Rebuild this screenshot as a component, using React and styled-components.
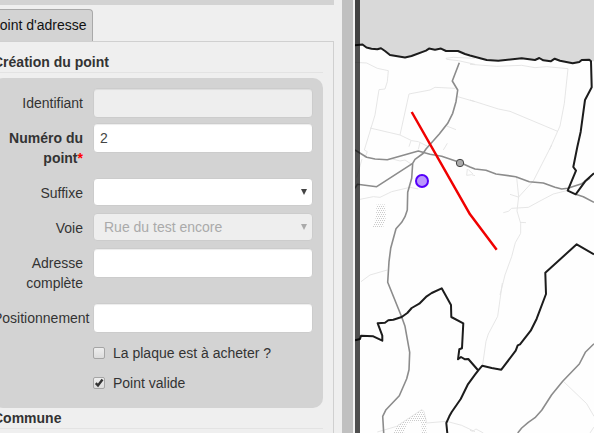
import React from "react";
import styled, { createGlobalStyle } from "styled-components";

const GlobalStyle = createGlobalStyle`
  * { box-sizing: border-box; }
  body { margin: 0; overflow: hidden; background: #fff; }
`;

const Page = styled.div`
  display: flex;
  width: 594px;
  height: 433px;
  overflow: hidden;
  font: 14px/20px "Liberation Sans", Arial, sans-serif;
  color: #333;
`;

const Sidebar = styled.aside`
  width: 342px;
  flex: none;
  height: 433px;
  overflow: hidden;
  background: #efefef;
`;

const TopBar = styled.div`
  width: 334px;
  height: 5px;
  background: #d3d3d3;
`;

const TabList = styled.div`
  display: flex;
  height: 36px;
  padding-top: 4px;
  margin-left: -17px;
`;

const Tab = styled.div`
  width: 110px;
  height: 32px;
  padding: 5px 0 0 6.5px;
  border: 1px solid #a9a9a9;
  border-bottom: 0;
  border-radius: 4px 4px 0 0;
  background: #d3d3d3;
  color: #111;
  white-space: nowrap;
`;

const TabPanel = styled.section`
  width: 351px;
  height: 410px;
  margin-left: -17px;
  padding: 0 10px 0 9px;
  border: 1px solid #d0d0d0;
`;

const Legend = styled.h2`
  margin: 0;
  height: ${(p) => p.$height}px;
  padding-top: ${(p) => p.$top}px;
  border-bottom: 1px solid #e3e3e3;
  font-size: 14px;
  line-height: 20px;
  font-weight: bold;
`;

const FieldGroup = styled.div`
  width: 330px;
  height: 330px;
  margin-top: 5px;
  padding: 10px 10px 0 0;
  border-radius: 10px;
  background: #d3d3d3;
`;

const Row = styled.div`
  display: grid;
  grid-template-columns: 90px 220px;
  column-gap: 10px;
  height: ${(p) => (p.$tall ? 55 : 35)}px;
`;

const Label = styled.label`
  padding-top: 5px;
  text-align: right;
  font-weight: ${(p) => (p.$bold ? "bold" : "normal")};
`;

const Required = styled.span`
  color: #f00;
`;

const Input = styled.input`
  width: 220px;
  height: 30px;
  padding: 0 6px;
  border: 1px solid #ccc;
  border-radius: 4px;
  background: ${(p) => (p.disabled ? "#eee" : "#fff")};
  box-shadow: inset 0 1px 1px rgba(0, 0, 0, 0.075);
  font: inherit;
  font-size: 14px;
  color: #444;
`;

const SelectBox = styled.div`
  display: flex;
  align-items: center;
  justify-content: space-between;
  height: 28px;
  padding: 0 5px 0 10px;
  border: 1px solid #ccc;
  border-radius: 4px;
  background: ${(p) => (p.$disabled ? "#eee" : "#fff")};
  color: ${(p) => (p.$disabled ? "#aaa" : "#444")};
`;

const Arrow = styled.i`
  border: 3px solid transparent;
  border-top: 6px solid currentColor;
  border-bottom: 0;
`;

const CheckRow = styled.label`
  display: flex;
  align-items: center;
  height: 30px;
  padding-left: 100px;
  gap: 8px;
`;

const CheckBox = styled.span`
  display: flex;
  width: 12px;
  height: 12px;
  border: 1px solid #a5a5a5;
  border-radius: 2px;
  background: linear-gradient(#eee, #dcdcdc);
`;

const Splitter = styled.div`
  width: 13px;
  flex: none;
  background: #c0c0c0;
  border-right: 2px solid #f4f4f4;
`;

const MapView = styled.svg`
  display: block;
  flex: none;
  width: 239px;
  height: 433px;
  fill: none;
  stroke-linejoin: round;
`;

const coast =
  "355,45.3 362.5,44.5 366.5,47.5 371.5,48.7 377.3,49.3 381,48.2 385,51 390,55 405,57.5 411.5,56 426,50.6 429,48.6 435,49.7 441,48.6 446,51 458,51 465,54 470,55.5 486.7,60 498.3,60.7 521.7,58.3 535,60 539.3,58 543.3,60.3 550.7,61.3 554.7,58.7 560,60.7 572.7,63.3 579.3,62 581.7,60 589.3,59.7 591,61.3";

const borders = [
  coast +
    " 591.7,87.3 585,100 580.7,131.7 577.3,147 573.3,167 576,170.7 567.7,190.7 575.7,194.3 585.7,180.7 594,173.2",
  "355,340.3 360,339 361,335.7 373.3,336.3 382.3,340.7 382.3,335.7 377.7,323.3 385,322.7 388.3,320.3 393.3,319.7 401.7,317 407.3,313 411.7,308 419.3,303.7 426.7,296.3 431.7,293 441.7,288.3 451,305 451.3,317 463.3,323.3 462,348.3 459.3,349.3 458,359.3 461,357 465,359.3 468.3,359 478.3,370.5",
  "594,254.3 576.7,244.3 545.3,272.7 546,294 536.7,318.7 530.7,330.7 520,344.3 517.7,345.3 515.7,350.7 501.3,369.7 491.7,368 482.3,365.7 478.3,370.3 475,374.7 467.7,384.7 460.7,399 451.7,412 449.3,416.3 446.3,423 447.3,433",
];

const roads = [
  "459.3,62.7 452.3,81 457.7,90 456,101.7 452.7,113.3 447.7,123.3 439.3,134 426,149 423,153.5 415,159.3 412.7,163.3 411.7,178.3 407.7,192.3 407.3,210 405,216.7 401.7,222.3 396,228.7 390.7,248.3 389,261.7 387.7,282.3 401.7,317 405,326.3 409.7,352.3 409,369.7 406.7,378.7 399.3,395.7 386,409.7 382.7,416.3 383.7,433",
  "355,150 366.7,157.3 375,159 387.3,159.7 418.3,151 430,154.3 441.7,156.3 460,162.5 470,167 475,169 486,170.3 496,174 515.7,176.7 529.3,181.7 543.3,183 555,187.3 561.7,189 567.7,188.3 581.7,183.7 590,178",
  "355,188.3 357.3,184.3 376.7,186.7 412.7,163.3",
  "575.7,194.3 583.3,196.7 594,202.3",
  "517.7,433 521.7,428 528.3,422.3 535,417.7 541.7,410.3 551.7,394.7 562.7,381.3 579.3,364 585.3,352.3 594,343.7",
];

/* Parcel tracks by map sheet, each drawn at three times the map scale. */
const tracks = [
  {
    x: 350,
    y: 0,
    d: "M15 187L50 189 82 205 115 212 112 245 105 267 87 269 75 345 43 450M60 384L150 405 185 422 205 425 235 440M150 405L177 282 240 270 255 262 315 265M323 290L375 305M375 175L310 172 288 175 290 178 325 182 375 193M290 378L318 389M183 422L177 440M210 428L205 448M292 430L280 450",
  },
  {
    x: 470,
    y: 0,
    d: "M0 193L80 199 155 196 195 203 230 200 294 206 283 310 270 378 238 450M0 300L85 327 120 334 263 394",
  },
  {
    x: 350,
    y: 145,
    d: "M43 15L52 20 45 38M36 42L20 98M120 40L150 48 165 45 185 58M30 163L70 155 90 157 125 140 180 127 205 132M33 410L60 390 112 375M352 72L350 91 365 89 375 92M355 74L369 87",
  },
  {
    x: 470,
    y: 145,
    d: "M245 0L190 108 145 157M140 98L146 155 141 198 152 235 152 265 136 293 125 335 105 390 90 450M120 148L145 156M100 203L115 199 125 190 175 187 210 168 250 147 290 137M150 232L168 233",
  },
  {
    x: 350,
    y: 283,
    d: "M82 447L140 430 215 380 222 385 230 420 290 415 335 427 375 446",
  },
  {
    x: 470,
    y: 283,
    d: "M97 0L90 50 83 100 55 153 48 175 38 245M280 295L350 362 372 400M0 442L8 445 18 438 40 450M372 432L360 450",
  },
];

function TextRow({ label, value = "", tall, bold, required, disabled }) {
  return (
    <Row $tall={tall}>
      <Label $bold={bold}>
        {label}
        {required && <Required>*</Required>}
      </Label>
      <Input defaultValue={value} disabled={disabled} />
    </Row>
  );
}

function SelectRow({ label, value, disabled }) {
  return (
    <Row>
      <Label>{label}</Label>
      <SelectBox $disabled={disabled}>
        <span>{value}</span>
        <Arrow />
      </SelectBox>
    </Row>
  );
}

function Check({ label, checked }) {
  return (
    <CheckRow>
      <CheckBox>
        {checked && (
          <svg width="10" height="10" viewBox="0 0 10 10">
            <path d="M1.8 5.1L4 7.5L8.5 1.6" fill="none" stroke="#333" strokeWidth="2.4" />
          </svg>
        )}
      </CheckBox>
      {label}
    </CheckRow>
  );
}

function ParcelMap() {
  return (
    <MapView viewBox="355 0 239 433">
      <defs>
        <pattern id="dots" width="2" height="4" patternUnits="userSpaceOnUse">
          <path d="M0 0h1v1h-1zM1 2h1v1h-1z" fill="#cbcbcb" />
        </pattern>
      </defs>
      <rect x="355" width="239" height="433" fill="#fefefe" />
      <polygon points={`355,0 ${coast} 594,61.3 594,0`} fill="#d9d9d9" />
      {tracks.map((t) => (
        <path
          key={`${t.x}-${t.y}`}
          d={t.d}
          transform={`translate(${t.x} ${t.y}) scale(.33333)`}
          stroke="#e3e3e3"
          strokeWidth="2.7"
        />
      ))}
      <path d="M376.5 204.5H385L386 217L383 228H372.5L376 217Z" fill="url(#dots)" />
      <path d="M393 433L398 425L421.5 410L426 418L426.5 433H422L421 421L407 423L404 433Z" fill="url(#dots)" />
      {roads.map((points) => (
        <polyline key={points} points={points} stroke="#8c8c8c" strokeWidth="1.6" />
      ))}
      {borders.map((points) => (
        <polyline key={points} points={points} stroke="#1c1c1c" strokeWidth="2" />
      ))}
      <circle cx="460" cy="163" r="3.7" fill="#aaa" stroke="#444" />
      <polyline points="411.7,112 470,214.3 496.7,249.7" stroke="#f00000" strokeWidth="2.5" />
      <circle cx="422" cy="181" r="6" fill="#b997fc" stroke="#5500fa" strokeWidth="2" />
      <rect x="355" width="5" height="433" fill="#000" fillOpacity=".69" />
    </MapView>
  );
}

export default function App() {
  return (
    <Page>
      <GlobalStyle />
      <Sidebar>
        <TopBar />
        <TabList>
          <Tab>Point d'adresse</Tab>
        </TabList>
        <TabPanel>
          <Legend $height={31} $top={10}>Création du point</Legend>
          <FieldGroup>
            <TextRow label="Identifiant" disabled />
            <TextRow label="Numéro du point" value="2" tall bold required />
            <SelectRow label="Suffixe" />
            <SelectRow label="Voie" value="Rue du test encore" disabled />
            <TextRow label="Adresse complète" tall />
            <TextRow label="Positionnement" />
            <Check label="La plaque est à acheter ?" />
            <Check label="Point valide" checked />
          </FieldGroup>
          <Legend $height={21} $top={0}>Commune</Legend>
        </TabPanel>
      </Sidebar>
      <Splitter />
      <ParcelMap />
    </Page>
  );
}
